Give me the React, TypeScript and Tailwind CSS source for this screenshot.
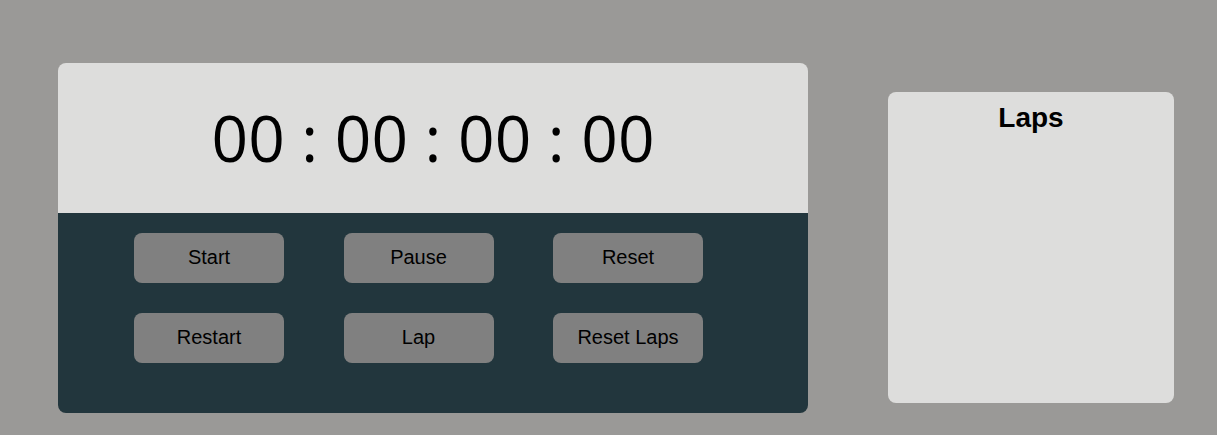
import React from "react";

const buttons = ["Start", "Pause", "Reset", "Restart", "Lap", "Reset Laps"];

export default function App() {
  return (
    <div className="w-[1217px] h-[435px] bg-[#9a9997] flex items-start" style={{ fontFamily: '"Liberation Sans", Arial, sans-serif' }}>
      <div className="ml-[58px] mt-[63px] w-[750px] h-[350px] rounded-[8px] overflow-hidden flex flex-col">
        <div className="h-[150px] bg-[#dddddc] flex items-center justify-center">
          <span className="text-[64px] leading-none text-black" style={{ fontFamily: '"Open Sans", sans-serif' }}>
            00 : 00 : 00 : 00
          </span>
        </div>
        <div className="flex-1 bg-[#22363d] pt-[20px] pl-[76px]">
          <div className="grid grid-cols-[150px_150px_150px] gap-x-[59.5px] gap-y-[30px]">
            {buttons.map((b) => (
              <button
                key={b}
                className="h-[50px] rounded-[8px] bg-[#808080] text-[20px] text-black flex items-center justify-center pb-[2px]"
              >
                {b}
              </button>
            ))}
          </div>
        </div>
      </div>
      <div className="ml-[80px] mt-[92px] w-[286px] h-[311px] rounded-[8px] bg-[#dddddc] flex flex-col items-center">
        <h2 className="mt-[10px] text-[28px] font-bold text-black leading-[32px]">Laps</h2>
      </div>
    </div>
  );
}
